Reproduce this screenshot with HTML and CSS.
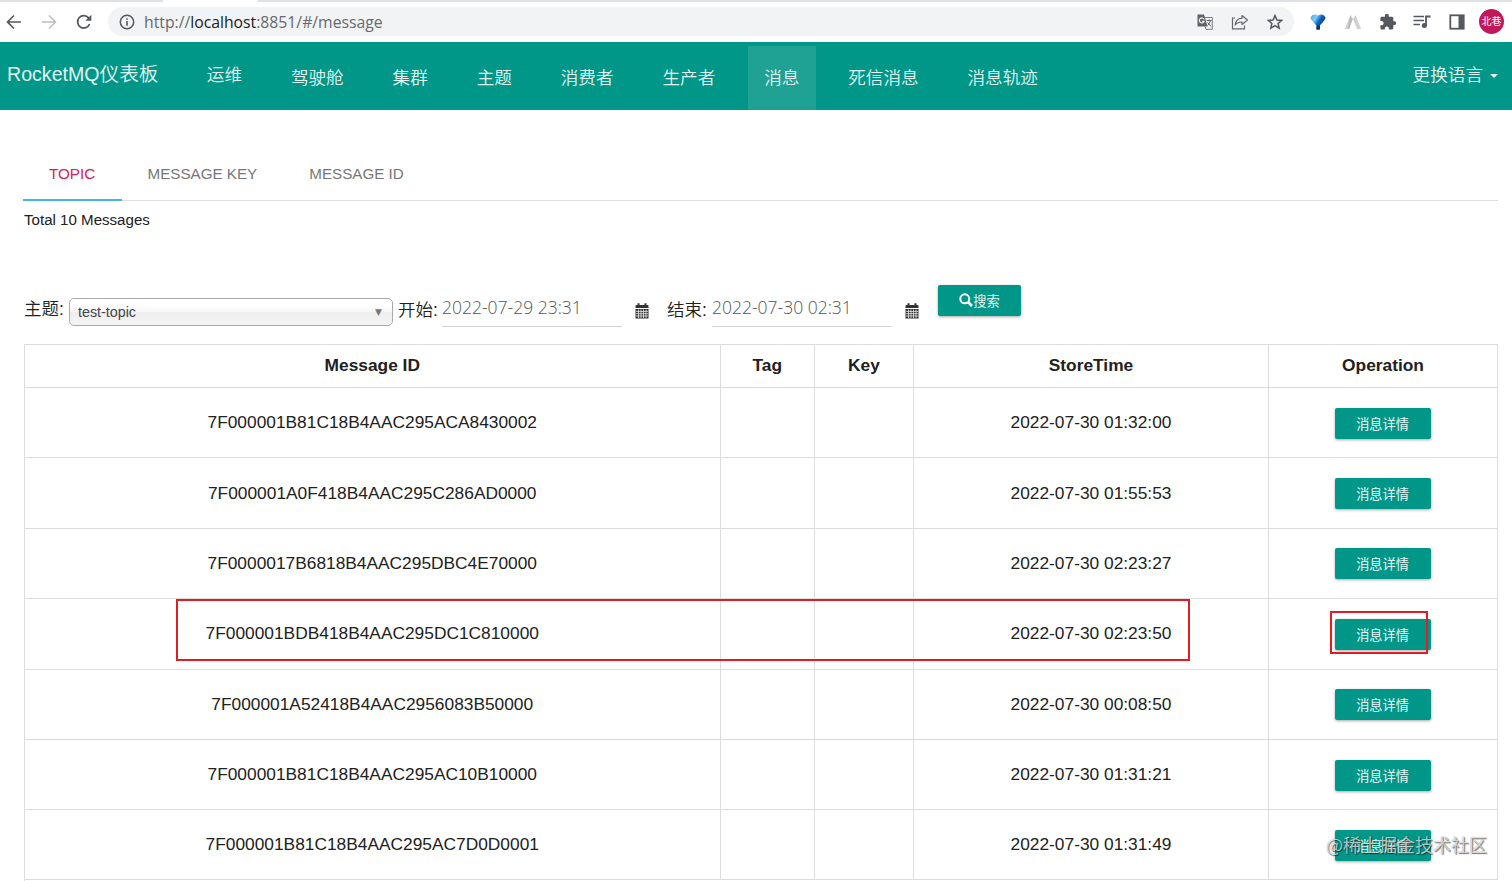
FILE: index.html
```html
<!DOCTYPE html>
<html lang="zh-CN">
<head>
<meta charset="utf-8">
<title>RocketMQ仪表板</title>
<link rel="stylesheet" href="styles.css">
</head>
<body>
<div class="browser">
  <div class="tabstrip"><span class="active-tab"></span></div>
  <div class="toolbar">
    <svg class="ic back" viewBox="0 0 16 16"><path d="M15 8H2M8 1.5L1.5 8L8 14.500" fill="none" stroke="#55585c" stroke-width="1.7"/></svg>
    <svg class="ic fwd" viewBox="0 0 16 16"><path d="M1 8H14M8 1.500L14.500 8L8 14.500" fill="none" stroke="#bbbdc0" stroke-width="1.500"/></svg>
    <svg class="ic reload" viewBox="0 0 16 16"><path d="M13.600 10A6.200 6.200 0 1 1 12.600 3.900L14 5.300" fill="none" stroke="#55585c" stroke-width="1.800"/><path d="M15.300 .8V6.800H9.300Z" fill="#55585c"/></svg>
    <div class="omnibox">
      <svg class="ic info" viewBox="0 0 16 16"><circle cx="8" cy="8" r="6.700" fill="none" stroke="#55585c" stroke-width="1.500"/><path d="M8 7V11.800M8 4.200V5.800" stroke="#55585c" stroke-width="1.600"/></svg>
      <span class="url">http://<b>localhost</b>:8851/#/message</span>
      <svg class="ic translate" viewBox="0 0 16 16"><path d="M6 3.500H15.300V15.300H9L8 12.500" fill="none" stroke="#777a7d" stroke-width="1"/><path d="M.5 .5H7L10.500 12.500H.5Z" fill="#5f6368"/><path d="M7 5.200A2.500 2.500 0 1 0 7.200 7.200H5" fill="none" stroke="#fff" stroke-width="1.100"/><path d="M9.500 6.500H14.500M12 5.500V6.500M13.500 6.500Q12.500 10 10.500 11.500M10.500 8.500L14 12.500" fill="none" stroke="#5f6368" stroke-width="1"/></svg>
      <svg class="ic share" viewBox="0 0 18 16"><path d="M4 4H1.500V14.800H13.500V11.500" fill="none" stroke="#65686b" stroke-width="1.200"/><path d="M11 1.500L16.500 6L11 10.500V8Q6.500 8 4.200 11Q4.800 4.800 11 4.200Z" fill="none" stroke="#65686b" stroke-width="1.200" stroke-linejoin="round"/></svg>
      <svg class="ic star" viewBox="0 0 16 16"><path d="M8 1.600L9.900 6L14.700 6.400L11.100 9.500L12.200 14.200L8 11.700L3.800 14.200L4.900 9.500L1.300 6.400L6.100 6Z" fill="none" stroke="#55585c" stroke-width="1.500"/></svg>
    </div>
    <svg class="ic funnel" viewBox="0 0 16 16"><defs><linearGradient id="balloon" x2="1" y2=".6"><stop stop-color="#3f9fe6"/><stop offset=".35" stop-color="#7fd0f7"/><stop offset=".6" stop-color="#1467c4"/><stop offset="1" stop-color="#042a72"/></linearGradient></defs><path d="M.5 3.500Q2 .5 4.500 .5Q6.500 .5 8 1.500Q9.500 .5 11.500 .5Q14 .5 15.500 3.500Q15.300 6 9.800 11.500V15.500H6.400V11.500Q.7 6 .5 3.500Z" fill="url(#balloon)"/><path d="M7 11.500H9.800V15.500H6.400Z" fill="#06306f"/></svg>
    <svg class="ic peaks" viewBox="0 0 18 16"><path d="M6.500 1L9 5L5 15H.8ZM11.500 1L17.200 15H13L9 5Z" fill="#d1d1d1"/><path d="M6.500 1L8 6L5 15H3.500Z" fill="#b8b8b8"/></svg>
    <svg class="ic puzzle" viewBox="1.500 1.500 21 21"><path d="M20.500 11H19V7c0-1.100-.9-2-2-2h-4V3.500C13 2.120 11.880 1 10.500 1S8 2.120 8 3.500V5H4c-1.100 0-1.990.9-1.990 2v3.800H3.500c1.490 0 2.700 1.210 2.700 2.700s-1.210 2.700-2.700 2.700H2V20c0 1.100.9 2 2 2h3.800v-1.500c0-1.490 1.210-2.700 2.700-2.700 1.490 0 2.700 1.210 2.700 2.700V22H17c1.100 0 2-.9 2-2v-4h1.500c1.380 0 2.500-1.120 2.500-2.500S21.880 11 20.500 11z" fill="#55585c"/></svg>
    <svg class="ic queue" viewBox="0 0 18 16"><path d="M.5 2.500H11M.5 6.500H11M.5 10.500H7" stroke="#55585c" stroke-width="1.700"/><circle cx="11.300" cy="11.600" r="2.500" fill="#55585c"/><path d="M13 12V2.500H17.500" fill="none" stroke="#55585c" stroke-width="1.800"/></svg>
    <svg class="ic panel" viewBox="0 0 16 16"><rect x="1.300" y="1.300" width="13.400" height="13.400" fill="none" stroke="#55585c" stroke-width="1.800"/><path d="M9.500 1H15V15H9.500Z" fill="#55585c"/></svg>
    <span class="avatar">北巷</span>
  </div>
</div>
<nav class="navbar">
  <span class="brand">RocketMQ仪表板</span>
  <span class="item first">运维</span>
  <span class="item">驾驶舱</span>
  <span class="item">集群</span>
  <span class="item">主题</span>
  <span class="item">消费者</span>
  <span class="item">生产者</span>
  <span class="item active">消息</span>
  <span class="item">死信消息</span>
  <span class="item">消息轨迹</span>
  <span class="lang">更换语言<i class="caret"></i></span>
</nav>
<main class="page">
  <div class="tabs">
    <span class="tab selected">TOPIC</span><span class="tab">MESSAGE KEY</span><span class="tab">MESSAGE ID</span>
  </div>
  <p class="total">Total 10 Messages</p>
  <div class="filters">
    <span class="label topic">主题:</span>
    <span class="select">test-topic<i class="arrow">▼</i></span>
    <span class="label begin">开始:</span>
    <span class="date">2022-07-29 23:31</span>
    <svg class="cal" viewBox="0 0 14 16"><path d="M.5 3Q.5 2 1.500 2H2.500V.3H4.500V2H9.500V.3H11.500V2H12.500Q13.500 2 13.500 3V5H.5ZM.5 6H13.500V15.500H.5Z" fill="#333"/><path d="M1 8.400H13M1 10.700H13M1 13H13M3.500 6.500V15M6 6.500V15M8.500 6.500V15M11 6.500V15" stroke="#fff" stroke-width=".7"/></svg>
    <span class="label end">结束:</span>
    <span class="date">2022-07-30 02:31</span>
    <svg class="cal" viewBox="0 0 14 16"><path d="M.5 3Q.5 2 1.500 2H2.500V.3H4.500V2H9.500V.3H11.500V2H12.500Q13.500 2 13.500 3V5H.5ZM.5 6H13.500V15.500H.5Z" fill="#333"/><path d="M1 8.400H13M1 10.700H13M1 13H13M3.500 6.500V15M6 6.500V15M8.500 6.500V15M11 6.500V15" stroke="#fff" stroke-width=".7"/></svg>
    <span class="btn search"><svg class="lens" viewBox="0 0 14 14"><circle cx="5.800" cy="5.800" r="4.500" fill="none" stroke="#fff" stroke-width="2"/><path d="M9 9L13 13" stroke="#fff" stroke-width="2.600"/></svg>搜索</span>
  </div>
  <div class="table">
    <div class="row head"><span>Message ID</span><span>Tag</span><span>Key</span><span>StoreTime</span><span>Operation</span></div>
    <div class="row"><span>7F000001B81C18B4AAC295ACA8430002</span><span></span><span></span><span>2022-07-30 01:32:00</span><span><b class="btn">消息详情</b></span></div>
    <div class="row"><span>7F000001A0F418B4AAC295C286AD0000</span><span></span><span></span><span>2022-07-30 01:55:53</span><span><b class="btn">消息详情</b></span></div>
    <div class="row"><span>7F0000017B6818B4AAC295DBC4E70000</span><span></span><span></span><span>2022-07-30 02:23:27</span><span><b class="btn">消息详情</b></span></div>
    <div class="row marked"><span>7F000001BDB418B4AAC295DC1C810000</span><span></span><span></span><span>2022-07-30 02:23:50</span><span><b class="btn">消息详情</b></span><i class="mark wide"></i><i class="mark small"></i></div>
    <div class="row"><span>7F000001A52418B4AAC2956083B50000</span><span></span><span></span><span>2022-07-30 00:08:50</span><span><b class="btn">消息详情</b></span></div>
    <div class="row"><span>7F000001B81C18B4AAC295AC10B10000</span><span></span><span></span><span>2022-07-30 01:31:21</span><span><b class="btn">消息详情</b></span></div>
    <div class="row last"><span>7F000001B81C18B4AAC295AC7D0D0001</span><span></span><span></span><span>2022-07-30 01:31:49</span><span><b class="btn">消息详情</b></span></div>
  </div>
</main>
<div class="watermark">@稀土掘金技术社区</div>
</body>
</html>
```
FILE: styles.css
```css
* { box-sizing: border-box; }
html, body { margin: 0; height: 881px; overflow: hidden; }
body { position: relative; background: #fff; color: #212121; font-family: "Liberation Sans", "Noto Sans CJK SC", sans-serif; }
svg { display: block; flex: none; }
i { font-style: normal; }

.browser { height: 42px; background: #fff; }
.tabstrip { height: 2px; background: #dee1e6; padding-left: 163px; }
.active-tab { display: block; width: 95px; height: 2px; background: #fff; }
.toolbar { display: flex; align-items: center; height: 39px; padding-left: 6px; }
.ic { width: 16px; height: 16px; }
.fwd { margin-left: 19px; }
.reload { margin-left: 19px; }
.omnibox { display: flex; align-items: center; width: 1186px; height: 29px; margin-left: 16px; padding-left: 11px; border-radius: 15px; background: #f1f3f4; }
.url { width: 1052px; margin-left: 9px; font: 15.750px/28px "Open Sans", sans-serif; color: #66696d; white-space: nowrap; }
.url b { font-weight: 400; color: #202124; }
.translate { margin-left: 1px; }
.share { width: 18px; margin-left: 18px; }
.star { margin-left: 18px; }
.funnel { margin-left: 16px; }
.peaks { width: 18px; margin-left: 18px; }
.puzzle { margin-left: 18px; }
.queue { width: 18px; margin-left: 17px; }
.panel { margin-left: 18px; }
.avatar { width: 25px; height: 25px; margin-left: 14px; border-radius: 50%; background: #c2185b; color: #fff; font: 10px/24px "Noto Sans CJK SC", sans-serif; text-align: center; }

.navbar { display: flex; height: 68px; padding: 4px 14px 0 7px; background: #009688; color: #e0f4f1; font-size: 17.600px; font-weight: 350; line-height: 64px; white-space: nowrap; }
.brand { width: 183.500px; font-size: 19.600px; line-height: 57px; }
.item { padding: 0 16.300px; margin-right: 16.300px; }
.first { line-height: 58px; }
.active { background: #1fa193; }
.lang { display: flex; align-items: center; gap: 7px; height: 58px; margin-left: auto; }
.caret { border: 4px solid transparent; border-top-color: #e5f5f3; border-bottom: 0; margin-top: 2px; }

.page { padding: 37px 14px 0 24px; }
.tabs { display: flex; height: 54px; margin-left: -1px; border-bottom: 1px solid #dedede; font-size: 15.200px; line-height: 54px; color: #777; }
.tab { height: 54px; padding: 0 26px; }
.selected { width: 98.500px; color: #d81b60; border-bottom: 2px solid #42b6e8; }
.total { height: 40px; margin: 0; font-size: 15.100px; line-height: 38px; }
.filters { display: flex; height: 103px; padding-top: 44px; white-space: nowrap; }
.label { font-size: 17.500px; line-height: 50px; font-weight: 350; }
.topic { width: 45px; line-height: 49px; }
.select { display: flex; justify-content: space-between; width: 324px; height: 28px; margin-top: 13px; padding: 0 10px 0 8px; border: 1px solid #aaa; border-radius: 5px; background: linear-gradient(#fff 20%, #f6f6f6 50%, #eee 52%, #f4f4f4); font-size: 14.300px; line-height: 27px; color: #444; }
.arrow { font: 9px/26px "DejaVu Sans", sans-serif; color: #777; }
.begin { width: 44px; margin-left: 5px; }
.date { width: 180px; height: 42px; border-bottom: 1px solid #d2d2d2; font: 300 17.500px/45px "Open Sans", sans-serif; color: #555; }
.cal { width: 14px; height: 16px; margin: 18px 0 0 13px; }
.end { width: 45px; margin-left: 18px; }
.btn { display: flex; align-items: center; justify-content: center; width: 96px; height: 31px; margin-top: 1px; border-radius: 2px; background: #009688; box-shadow: 0 1px 3px rgba(0,0,0,.35); color: #e8f8f5; font-size: 13.200px; font-weight: 400; }
.row .btn { margin-left: -1px; }
.filters .search { width: 83px; margin: 0 0 0 19px; padding-bottom: 1px; }
.lens { width: 14px; height: 14px; }

.table { height: 537px; border-left: 1px solid #ddd; font-size: 17.330px; }
.row { position: relative; display: grid; grid-template-columns: 695.500px 94.500px 99px 355px 229px; height: 70.380px; border-top: 1px solid #ddd; }
.row > span { display: flex; align-items: center; justify-content: center; border-right: 1px solid #ddd; }
.head { height: 43px; font-weight: 700; }
.head > span { padding-bottom: 2px; }
.last { height: 71px; border-bottom: 1px solid #ddd; }
.mark { position: absolute; border: 2px solid #e01c24; }
.wide { left: 151px; top: 0; width: 1014px; height: 62px; }
.small { left: 1305px; top: 12px; width: 98px; height: 43px; }
.watermark { position: absolute; right: 25px; bottom: 22px; font: 18px/30px "Noto Sans CJK SC", sans-serif; color: rgba(255,255,255,.7); text-shadow: 1px 1px 1px rgba(0,0,0,.55), 0 0 1px rgba(0,0,0,.4); }
```
